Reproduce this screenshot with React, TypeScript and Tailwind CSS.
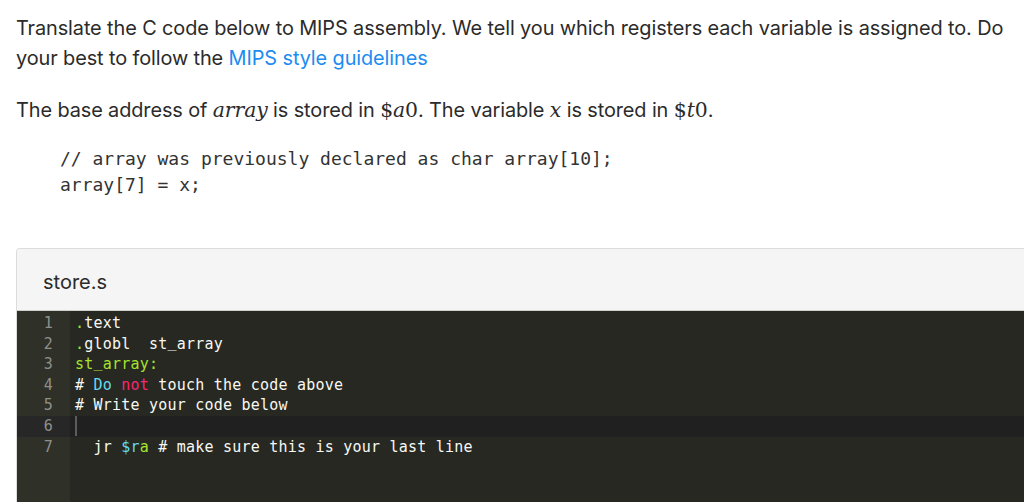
const sans = "font-['Inter','Liberation_Sans',sans-serif]"
const mono = "font-['DejaVu_Sans_Mono','Liberation_Mono',monospace]"

function MathVar({ children }: { children: React.ReactNode }) {
  return <span className="font-['DejaVu_Serif','Liberation_Serif',serif] italic text-[20.4px]">{children}</span>
}

function Reg({ name }: { name: string }) {
  return (
    <span className="font-['DejaVu_Serif','Liberation_Serif',serif] text-[20.4px]">
      $<span className="italic">{name}</span>0
    </span>
  )
}

const U = () => <span className="relative -top-[2px]">_</span>

const lines: React.ReactNode[] = [
  <><span className="text-[#a6e22e]">.</span>text</>,
  <><span className="text-[#a6e22e]">.</span>globl  st<U />array</>,
  <span className="text-[#a6e22e]">st<U />array:</span>,
  <># <span className="text-[#66d9ef]">Do</span> <span className="text-[#f92672]">not</span> touch the code above</>,
  <># Write your code below</>,
  <span className="inline-block w-[2px] h-[20px] align-top bg-[#5c5c5c]" />,
  <>  jr <span className="text-[#66d9ef]">$r</span><span className="text-[#a6e22e]">a</span> # make sure this is your last line</>,
]

export default function App() {
  return (
    <div className={`${sans} bg-white text-[#2b2b2b] w-[1024px] h-[502px] overflow-hidden pt-[13px] pl-4`}>
      <p className="text-[19.9px] leading-[30px] tracking-[-0.1px]">
        Translate the C code below to MIPS assembly. We tell you which registers each variable is assigned to. Do
        <br />
        your best to follow the <span className="text-[#1c8cf0]">MIPS style guidelines</span>
      </p>
      <p className="mt-[22px] text-[19.9px] leading-[30px] tracking-[-0.1px]">
        The base address of <MathVar>array</MathVar> is stored in <Reg name="a" />. The variable <MathVar>x</MathVar> is stored in <Reg name="t" />.
      </p>
      <pre className={`${mono} mt-[21px] ml-[44px] text-[18px] leading-[26px] text-[#333]`}>
        {'// array was previously declared as char array[10];\narray[7] = x;'}
      </pre>
      <div className="mt-[50px] -mr-4 border-t border-l border-[#dcdcdc] rounded-tl-[4px] overflow-hidden">
        <div className="h-[62px] bg-[#f5f5f5] border-b border-[#cfcfcf] flex items-center pt-[4px] pl-[26px] text-[20px]">
          store.s
        </div>
        <div className={`${mono} flex bg-[#272822] h-[200px] text-[15px] tracking-[0.22px] leading-[20px]`}>
          <div className="w-[53px] bg-[#2f3129] pt-[2px] text-[#8f908a]">
            {lines.map((_, i) => (
              <div key={i} className={`h-[20.6px] text-right pr-[17px] ${i === 5 ? 'bg-[#272727]' : ''}`}>
                {i + 1}
              </div>
            ))}
          </div>
          <div className="flex-1 pt-[2px] text-[#f8f8f2]">
            {lines.map((l, i) => (
              <div key={i} className={`h-[20.6px] pl-[5px] whitespace-pre ${i === 5 ? 'bg-[#202020]' : ''}`}>
                {l}
              </div>
            ))}
          </div>
        </div>
      </div>
    </div>
  )
}
